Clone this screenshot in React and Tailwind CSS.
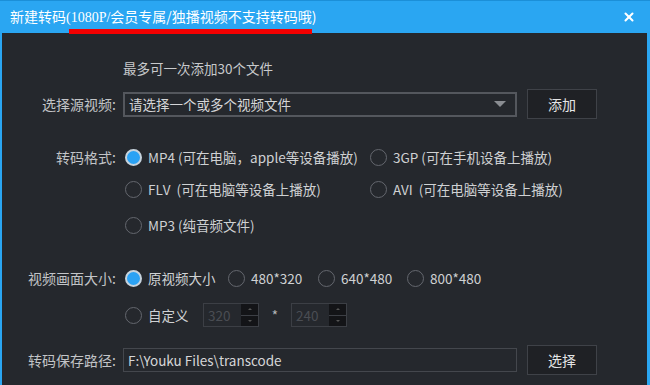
import { X } from "lucide-react";

const font = "font-['Microsoft_YaHei','Noto_Sans_CJK_SC',sans-serif]";

const Radio = ({ checked, label, className = "" }) => (
  <div className={`flex items-center h-full ${className}`}>
    {checked ? (
      <span className="w-[17px] h-[17px] rounded-full border-2 border-[#c7d3dd] bg-[#2ba2f4] shrink-0" />
    ) : (
      <span className="w-[17px] h-[17px] rounded-full border-[1.5px] border-[#64676e] shrink-0" />
    )}
    <span className="ml-[6px] whitespace-pre">{label}</span>
  </div>
);

const Label = ({ children }) => (
  <div className="w-[115px] shrink-0 text-right pr-[1px] text-[14px] text-[#c2c4c7]">{children}</div>
);

const Spin = ({ value }) => (
  <div className="flex w-[56px] h-[24px] border border-[#3c3f45]">
    <div className="flex-1 flex items-center pl-[4px] text-[#4a4d53]">{value}</div>
    <div className="w-[17px] flex flex-col bg-[#131417]">
      <div className="flex-1 flex items-center justify-center border-b border-[#3c3f45]">
        <span className="w-0 h-0 border-x-[2px] border-x-transparent border-b-[2px] border-b-[#555]" />
      </div>
      <div className="flex-1 flex items-center justify-center">
        <span className="w-0 h-0 border-x-[2px] border-x-transparent border-t-[2px] border-t-[#555]" />
      </div>
    </div>
  </div>
);

const Button = ({ children }) => (
  <button className="w-[70px] h-[30px] ml-[10px] border border-[#3f4248] bg-[#1f2125] text-[#e4e5e6] text-[14px]">
    {children}
  </button>
);

export default function App() {
  return (
    <div className={`w-[650px] h-[385px] overflow-hidden bg-[#2aa6f2] flex flex-col ${font}`}>
      {/* title bar */}
      <div className="h-[33px] shrink-0 border-t border-[#1b8fd8] flex items-center px-[10px] text-white relative">
        <span className="text-[14px]">
          新建转码<span className="font-['Liberation_Serif','Noto_Sans_CJK_SC',serif]">(1080P/</span>会员专属/独播视频不支持转码哦)
        </span>
        <span className="absolute left-[69px] top-[28px] w-[243px] h-[5px] bg-[#f30000]" />
        <X className="ml-auto mr-[4px] text-white" size={14} strokeWidth={3.5} />
      </div>

      {/* body */}
      <div className="flex-1 ml-[2px] mr-[3px] bg-[#25282d] text-[13.5px] text-[#cfd1d3]">
        <div className="h-[20px] mt-[25px] flex items-center pl-[121px] text-[#c8cacc]">最多可一次添加30个文件</div>

        <div className="h-[30px] mt-[11px] flex items-center">
          <Label>选择源视频:</Label>
          <div className="ml-[6px] w-[394px] h-[25px] border-2 border-[#54575d] flex items-center pl-[4px] text-[#d5d6d8]">
            请选择一个或多个视频文件
            <span className="ml-auto mr-[9px] w-0 h-0 border-x-[6px] border-x-transparent border-t-[6px] border-t-[#8a8d92]" />
          </div>
          <Button>添加</Button>
        </div>

        <div className="h-[24px] mt-[26px] flex items-center">
          <Label>转码格式:</Label>
          <Radio checked label="MP4 (可在电脑，apple等设备播放)" className="ml-[8px] w-[245px]" />
          <Radio label="3GP (可在手机设备上播放)" />
        </div>
        <div className="h-[24px] mt-[8px] flex items-center">
          <div className="w-[115px]" />
          <Radio label="FLV  (可在电脑等设备上播放)" className="ml-[8px] w-[245px]" />
          <Radio label="AVI  (可在电脑等设备上播放)" />
        </div>
        <div className="h-[24px] mt-[12px] flex items-center">
          <div className="w-[115px]" />
          <Radio label="MP3 (纯音频文件)" className="ml-[8px]" />
        </div>

        <div className="h-[24px] mt-[29px] flex items-center">
          <Label>视频画面大小:</Label>
          <Radio checked label="原视频大小" className="ml-[8px] w-[103px]" />
          <Radio label="480*320" className="w-[90px]" />
          <Radio label="640*480" className="w-[89px]" />
          <Radio label="800*480" />
        </div>
        <div className="h-[24px] mt-[13px] flex items-center">
          <div className="w-[115px]" />
          <Radio label="自定义" className="ml-[8px] w-[78px]" />
          <Spin value="320" />
          <span className="w-[32px] text-center text-[#b8babd]">*</span>
          <Spin value="240" />
        </div>

        <div className="h-[30px] mt-[18px] flex items-center">
          <Label>转码保存路径:</Label>
          <div className="ml-[6px] w-[394px] h-[24px] border border-[#44474d] flex items-center pl-[4px] text-[#d5d6d8]">
            F:\Youku Files\transcode
          </div>
          <Button>选择</Button>
        </div>
      </div>
    </div>
  );
}
